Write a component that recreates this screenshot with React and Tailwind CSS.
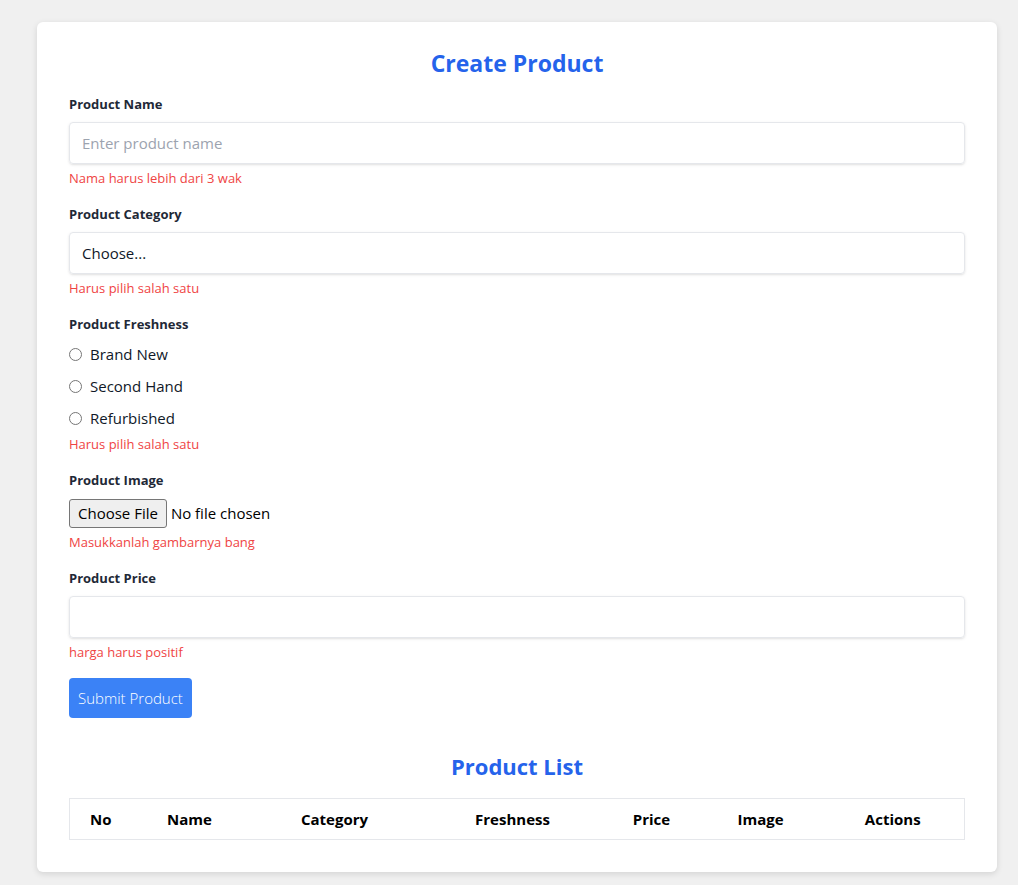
import React from "react";

function Label({ children }) {
  return <div className="text-[13px] leading-5 font-bold text-[#1f2937]">{children}</div>;
}
function Err({ children, className = "mt-1" }) {
  return <div className={`text-[13px] leading-5 text-[#ef4444] ${className}`}>{children}</div>;
}

export default function App() {
  const font = { fontFamily: '"Open Sans", "Noto Sans", sans-serif' };
  return (
    <div className="min-h-screen bg-[#f0f0f0] pt-[22px] pb-[14px]" style={font}>
      <div className="ml-[37px] w-[960px] bg-white rounded-md shadow-[0_2px_6px_rgba(0,0,0,0.12)] px-8 pt-[25px] pb-8">
        <h1 className="text-center text-[23px] leading-8 font-bold text-[#2563eb]">Create Product</h1>

        <div className="mt-[15px]">
          <Label>Product Name</Label>
          <input
            type="text"
            placeholder="Enter product name"
            className="mt-2 block w-full h-[42px] px-3 rounded border border-[#e5e7eb] shadow-sm text-[15px] text-gray-800 placeholder:text-[#9ca3af] outline-none"
          />
          <Err>Nama harus lebih dari 3 wak</Err>
        </div>

        <div className="mt-4">
          <Label>Product Category</Label>
          <div className="mt-2 flex items-center w-full h-[42px] px-3 rounded border border-[#e5e7eb] shadow-sm text-[15px] text-gray-900">
            Choose...
          </div>
          <Err>Harus pilih salah satu</Err>
        </div>

        <div className="mt-4">
          <Label>Product Freshness</Label>
          <div className="mt-2 flex flex-col gap-2">
            {["Brand New", "Second Hand", "Refurbished"].map((t) => (
              <label key={t} className="flex items-center h-6 gap-2 text-[15px] text-gray-900">
                <span className="w-[13px] h-[13px] rounded-full border border-[#767676] bg-white" />
                {t}
              </label>
            ))}
          </div>
          <Err>Harus pilih salah satu</Err>
        </div>

        <div className="mt-4">
          <Label>Product Image</Label>
          <div className="mt-2 flex items-center gap-1 h-[30px] text-[15px] text-black">
            <span className="h-[29px] px-2 flex items-center bg-[#efefef] border border-[#767676] rounded-[3px]">Choose File</span>
            <span>No file chosen</span>
          </div>
          <Err className="mt-[4px]">Masukkanlah gambarnya bang</Err>
        </div>

        <div className="mt-4">
          <Label>Product Price</Label>
          <input
            type="text"
            className="mt-2 block w-full h-[42px] px-3 rounded border border-[#e5e7eb] shadow-sm text-[15px] outline-none"
          />
          <Err>harga harus positif</Err>
        </div>

        <button className="mt-4 h-10 px-[9px] rounded bg-[#3b82f6] text-white text-[15px] font-light">Submit Product</button>

        <h2 className="mt-8 text-center text-[22px] leading-8 font-bold text-[#2563eb]">Product List</h2>

        <table className="mt-4 w-full table-fixed border border-[#e5e7eb] border-collapse">
          <thead>
            <tr className="h-[41px] text-[15px] font-bold text-black">
              <th className="w-[62px] text-center">No</th>
              <th className="w-[116px] text-center">Name</th>
              <th className="w-[174px] text-center">Category</th>
              <th className="w-[182px] text-center">Freshness</th>
              <th className="w-[96px] text-center">Price</th>
              <th className="w-[122px] text-center">Image</th>
              <th className="text-center">Actions</th>
            </tr>
          </thead>
        </table>
      </div>
    </div>
  );
}
